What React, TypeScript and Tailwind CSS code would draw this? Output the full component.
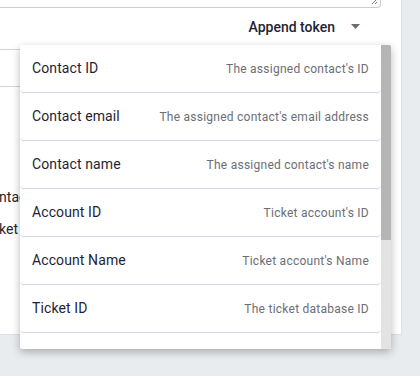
import React from "react";

type Token = { label: string; desc: string };

const TOKENS: Token[] = [
  { label: "Contact ID", desc: "The assigned contact's ID" },
  { label: "Contact email", desc: "The assigned contact's email address" },
  { label: "Contact name", desc: "The assigned contact's name" },
  { label: "Account ID", desc: "Ticket account's ID" },
  { label: "Account Name", desc: "Ticket account's Name" },
  { label: "Ticket ID", desc: "The ticket database ID" },
  { label: "Ticket subject", desc: "The ticket subject" },
];

function Caret() {
  return (
    <svg width="9" height="5" viewBox="0 0 9 5" className="block">
      <path d="M0 0 L9 0 L4.5 5 Z" fill="#6b6e73" />
    </svg>
  );
}

function ResizeGrip() {
  return (
    <svg width="7" height="7" viewBox="0 0 7 7" className="absolute right-[2px] bottom-[2px]">
      <path d="M1 6 L6 1 M4 6 L6 4" stroke="#7a7a7a" strokeWidth="1" />
    </svg>
  );
}

export default function App() {
  return (
    <div
      className="relative w-[420px] h-[376px] overflow-hidden bg-[#e9ecef] text-[#212529]"
      style={{ fontFamily: "Roboto, 'Liberation Sans', sans-serif" }}
    >
      {/* page panel */}
      <div className="w-[402px] h-[335px] bg-white border-r border-b border-[#dcdfe3] flex flex-col overflow-hidden">
        {/* textarea bottom edge */}
        <div className="relative -ml-2 w-[389px] h-[8px] border border-t-0 border-[#c9ccd1] rounded-b-[4px] shrink-0">
          <ResizeGrip />
        </div>

        {/* append token */}
        <div className="h-[37px] flex items-center justify-end pr-[41px] gap-4 shrink-0">
          <span className="text-[14px] font-medium text-[#1f2433] leading-none pt-[1px]">Append token</span>
          <Caret />
        </div>

        {/* input field (mostly hidden) */}
        <div className="mt-[4px] -ml-2 w-[380px] h-[38px] border-y border-[#d3d5dc] shrink-0" />

        {/* token list behind menu */}
        <div className="mt-[100px] -ml-[18px] flex flex-col gap-[12px] text-[14px] leading-[20px] text-[#212529]">
          <span>Contact name</span>
          <span className="-ml-[2px]">Ticket ID</span>
        </div>
      </div>

      {/* dropdown menu */}
      <div className="absolute left-[20px] top-[45px] w-[371px] h-[304px] bg-white rounded-[2px] shadow-[0_3px_8px_rgba(0,0,0,0.28)] flex overflow-hidden">
        <div className="flex-1 flex flex-col overflow-hidden">
          {TOKENS.map((t) => (
            <div
              key={t.label}
              className="h-[48px] shrink-0 flex items-center justify-between px-3 border-b border-[#d6d7e0] rounded-b-[4px]"
            >
              <span className="text-[14px] text-[#1f2433] tracking-[0.1px]">{t.label}</span>
              <span className="text-[12px] text-[#6b6e75] tracking-[0.25px]">{t.desc}</span>
            </div>
          ))}
        </div>
        <div className="w-[10px] bg-[#e3e3e3] flex flex-col">
          <div className="h-[195px] bg-[#b5b5b5]" />
        </div>
      </div>
    </div>
  );
}
